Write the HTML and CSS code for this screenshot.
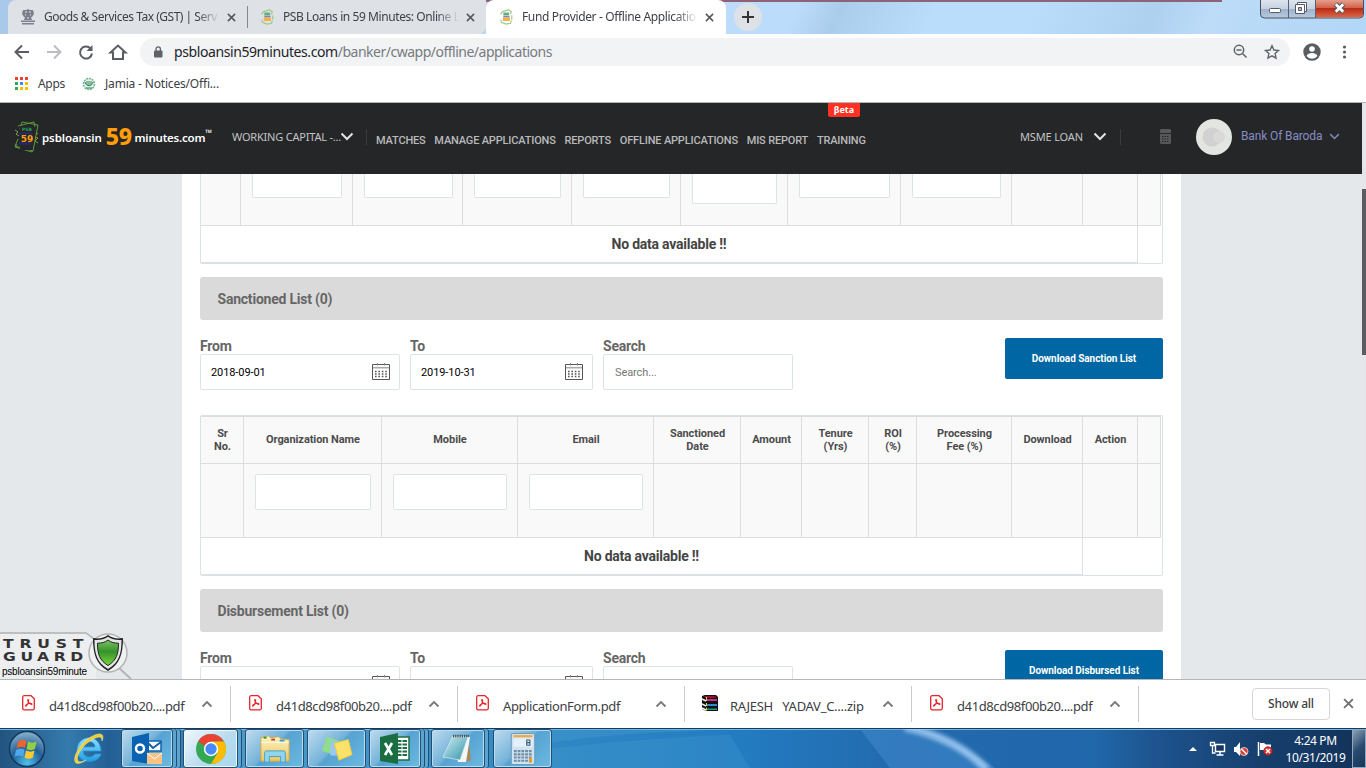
FILE: index.html
```html
<!DOCTYPE html>
<html lang="en">
<head>
<meta charset="utf-8">
<title>Fund Provider - Offline Applications</title>
<link rel="stylesheet" href="styles.css">
</head>
<body>
<svg width="0" height="0" class="defs">
  <defs>
    <linearGradient id="shieldGreen" x1="0" y1="0" x2="0" y2="1"><stop offset="0" stop-color="#7cc462"/><stop offset=".45" stop-color="#36922a"/><stop offset="1" stop-color="#79d43c"/></linearGradient>
    <radialGradient id="orb" cx=".5" cy=".9" r=".9"><stop offset="0" stop-color="#4fc0ee"/><stop offset=".5" stop-color="#235f97"/><stop offset="1" stop-color="#8cb4cf"/></radialGradient>
    <linearGradient id="folder" x1="0" y1="0" x2="0" y2="1"><stop offset="0" stop-color="#fff4c0"/><stop offset="1" stop-color="#e9c661"/></linearGradient>
    <linearGradient id="paper" x1="0" y1="0" x2="1" y2="1"><stop offset="0" stop-color="#d4eef2"/><stop offset="1" stop-color="#2f93a8"/></linearGradient>
    <linearGradient id="ieBlue" x1="0" y1="0" x2="0" y2="1"><stop offset="0" stop-color="#8fe0ff"/><stop offset="1" stop-color="#1c9de6"/></linearGradient>
    <symbol id="cross" viewBox="0 0 10 10"><path d="M1 1l8 8M9 1L1 9" fill="none" stroke="currentColor" stroke-width="1.7"/></symbol>
    <symbol id="caret" viewBox="0 0 12 8"><path d="M1.500 6.500L6 2l4.500 4.500" fill="none" stroke="currentColor" stroke-width="1.800"/></symbol>
    <symbol id="down" viewBox="0 0 14 9"><path d="M1.500 1.500L7 7l5.500-5.500" fill="none" stroke="currentColor" stroke-width="2"/></symbol>
    <symbol id="psb" viewBox="0 0 16 18">
      <path d="M4 3l7-2 3 2-1 3M2 12l1 3 5 2 5-1 1-3M2 6l2-3M14.500 7v5" fill="none" stroke="#9ccb80" stroke-width="1.300"/>
      <rect x="5" y="4" width="6.500" height="3" fill="#5fae84"/><rect x="5" y="7.500" width="7" height="2" fill="#7e88b0"/><rect x="4.500" y="9.500" width="8" height="4" fill="#f3b04b"/>
    </symbol>
    <symbol id="pdf" viewBox="0 0 13 16">
      <path d="M2 .7h7l3.300 3v9.600a1.500 1.500 0 0 1-1.500 1.500H2A1.500 1.500 0 0 1 .7 13.300V2.200A1.500 1.500 0 0 1 2 .7z" fill="#fff" stroke="#e5252a" stroke-width="1.300"/>
      <path d="M6 4.500c-1.200.3.800 4 3.300 4.900 1.500.2.800-1.500-2-.9-2.600.6-4.100 1.800-3.700 2.500.7.700 2.500-2.500 3-4.600.2-1.200-.1-1.900-.6-1.900z" fill="none" stroke="#e5252a" stroke-width="1.100"/>
    </symbol>
    <symbol id="cal" viewBox="0 0 18 17">
      <path d="M.5 1.500h17v15H.5z" fill="#fff" stroke="#555"/><path d="M1 4.700h16" stroke="#aaa" stroke-width="1.600"/>
      <path d="M5.500 0v2.500M12.500 0v2.500" stroke="#888"/>
      <path d="M3 8.500h12.500M3 11h12.500M3 13.500h12.500" stroke="#555" stroke-width="1.400" stroke-dasharray="1.600 1.800"/>
    </symbol>
  </defs>
</svg>

<header class="tabstrip">
  <div class="tabs-muted">
    <div class="tab tab-first">
      <svg class="fav" viewBox="0 0 16 16"><path d="M3 1h3l2-1 2 1h3l1 4-2 3H4L2 5zM5 8h6l1 3H4zM1 11.500h14v1.500H1zM2 14h12v1.500H2z" fill="#7c808e"/><path d="M5 3h2M9 3h2M5 6h1M10 6h1M7 9h2" stroke="#dee1e6"/></svg>
      <span class="tab-title t-gst">Goods &amp; Services Tax (GST) | Serv</span>
      <svg class="x"><use href="#cross"/></svg>
    </div>
    <div class="tab tab-second">
      <svg class="fav"><use href="#psb"/></svg>
      <span class="tab-title t-psb">PSB Loans in 59 Minutes: Online L</span>
      <svg class="x"><use href="#cross"/></svg>
    </div>
  </div>
  <div class="tab tab-active">
    <svg class="fav"><use href="#psb"/></svg>
    <span class="tab-title t-fund">Fund Provider - Offline Applicatio</span>
    <svg class="x"><use href="#cross"/></svg>
  </div>
  <svg class="newtab" viewBox="0 0 28 28"><circle cx="14" cy="14" r="14" fill="#dee1e6"/><path d="M14 8v12M8 14h12" stroke="#333" stroke-width="2"/></svg>
  <svg class="winctl" viewBox="0 0 104 19">
    <defs><linearGradient id="wb" x1="0" y1="0" x2="0" y2="1"><stop offset="0" stop-color="#dfe7ef"/><stop offset=".5" stop-color="#c6d3e2"/><stop offset=".51" stop-color="#9db0c8"/><stop offset="1" stop-color="#b8cbe0"/></linearGradient>
    <linearGradient id="wr" x1="0" y1="0" x2="0" y2="1"><stop offset="0" stop-color="#e8a797"/><stop offset=".5" stop-color="#cf5e48"/><stop offset=".51" stop-color="#bb2a12"/><stop offset="1" stop-color="#d9694e"/></linearGradient></defs>
    <path d="M.5-1v15a4 4 0 0 0 4 4h95a4 4 0 0 0 4-4V-1z" fill="url(#wb)" stroke="#46505e"/>
    <path d="M56-1v18.500h43.500a3.500 3.500 0 0 0 3.500-3.500V-1z" fill="url(#wr)"/>
    <path d="M28.500 0v18M55.500 0v18" stroke="#566273"/>
    <rect x="9.500" y="8.500" width="11" height="4" rx="1" fill="#fff" stroke="#555a66"/>
    <path d="M37.500 2.500h9v9h-9z" fill="#fff" stroke="#555a66"/><path d="M35.500 4.500h9v9h-9z" fill="#fff" stroke="#555a66"/><path d="M38.500 7.500h3v3h-3z" fill="#aabbd0" stroke="#555a66"/>
    <path d="M75.500 4l8 8M83.500 4l-8 8" stroke="#555a66" stroke-width="5"/><path d="M75.800 4.300l7.400 7.400M83.200 4.300l-7.400 7.400" stroke="#fff" stroke-width="2.800"/>
  </svg>
</header>

<div class="toolbar">
  <svg class="nav-icons" viewBox="0 0 140 36" fill="none">
    <path d="M29 18H16M22 11.500L15.500 18l6.500 6.500" stroke="#5a5e63" stroke-width="2"/>
    <path d="M47 18h13M54 11.500l6.500 6.500-6.500 6.500" stroke="#bbbdc0" stroke-width="2"/>
    <path d="M90.500 14.500A6 6 0 1 0 92 19.500" stroke="#5a5e63" stroke-width="2"/><path d="M92.500 11v6h-6z" fill="#5a5e63"/>
    <path d="M110.500 18.500l7.500-7 7.500 7H123v6.500h-10v-6.500z" stroke="#5a5e63" stroke-width="2"/>
  </svg>
  <div class="omnibox">
    <svg class="lock" viewBox="0 0 10 12"><rect x="1" y="4.500" width="8.500" height="7" rx="1" fill="#5f6368"/><path d="M3 5V3a2.200 2.200 0 0 1 4.400 0v2" fill="none" stroke="#5f6368" stroke-width="1.300"/></svg>
    <span class="url"><b>psbloansin59minutes.com</b>/banker/cwapp/offline/applications</span>
    <svg class="omni-icons" viewBox="0 0 50 18" fill="none" stroke="#5f6368"><circle cx="6" cy="7" r="4.700" stroke-width="1.500"/><path d="M9.500 10.500l4 4M3.500 7h5" stroke-width="1.500"/><path d="M39 2.800l1.900 4.200 4.600.5-3.400 3.100.9 4.500-4-2.300-4 2.300.9-4.500-3.400-3.100 4.600-.5z" stroke-width="1.400"/></svg>
  </div>
  <svg class="right-icons" viewBox="0 0 60 20"><circle cx="12" cy="10" r="8.700" fill="#5a5e63"/><circle cx="12" cy="7" r="2.800" fill="#fff"/><path d="M6.500 14c1.500-4 9.500-4 11 0a7 7 0 0 1-11 0z" fill="#fff"/><g fill="#5a5e63"><circle cx="44.500" cy="5" r="1.600"/><circle cx="44.500" cy="10" r="1.600"/><circle cx="44.500" cy="15" r="1.600"/></g></svg>
</div>

<div class="bookmarks">
  <svg class="apps" viewBox="0 0 13 13"><path d="M0 0h3v3H0zM5 0h3v3H5zM10 0h3v3h-3z" fill="#ea4335"/><path d="M0 5h3v3H0zM0 10h3v3H0z" fill="#34a853"/><path d="M5 5h3v3H5z" fill="#4285f4"/><path d="M10 5h3v3h-3zM10 10h3v3h-3zM5 10h3v3H5z" fill="#fbbc05"/></svg>
  <span class="bk-apps">Apps</span>
  <svg class="jamia" viewBox="0 0 14 14"><circle cx="7" cy="7" r="5.500" fill="#e6f1eb" stroke="#74b592" stroke-width="1.500" stroke-dasharray="2 .8"/><path d="M3 5c1 5 7 5 8 0M5 4v4M7 4v5M9 4v4M4 11h6" fill="none" stroke="#2d8259"/></svg>
  <span class="bk-jamia">Jamia - Notices/Offi...</span>
</div>

<div class="viewport">
  <div class="page">
    <nav class="topnav">
      <svg class="logo-cards" viewBox="0 0 27 34">
        <g fill="none" stroke="#5a9a3c" stroke-width="1"><path d="M7 9L9 2l16 3-5 26L2 26l3-7"/><path d="M5 6l16-4 1 5M4 24l-2 3 17 5 1-6"/></g>
        <path d="M2 10l3 2-2 2 3 2M22 17l3 1-3 3 3 2M23 13l2 1" stroke="#7b9e47" fill="none"/>
        <rect x="7" y="6" width="13" height="24" fill="#252628"/><rect x="6" y="12" width="13" height="3" fill="#28275e"/><rect x="6" y="22" width="12" height="3" fill="#28275e"/>
        <text x="14" y="11" text-anchor="middle" class="lg-psb">PSB</text><text x="14" y="22" text-anchor="middle" class="lg-59">59</text>
      </svg>
      <div class="brand"><span class="br-a">psbloansin</span><span class="br-59">59</span><span class="br-b">minutes.com</span><sup>™</sup></div>
      <span class="wc">WORKING CAPITAL -...</span><svg class="dn white"><use href="#down"/></svg>
      <i class="sep sep-a"></i>
      <div class="menu"><span>MATCHES</span><span>MANAGE APPLICATIONS</span><span>REPORTS</span><span>OFFLINE APPLICATIONS</span><span>MIS REPORT</span><span class="train">TRAINING<em class="beta">βeta</em></span></div>
      <span class="msme">MSME LOAN</span><svg class="dn white"><use href="#down"/></svg>
      <i class="sep sep-b"></i>
      <svg class="calc" viewBox="0 0 11 15"><path d="M1 0h9l1 1v3H0V1z" fill="#57585a"/><path d="M0 5h11v9l-1 1H1l-1-1z" fill="#57585a"/><path d="M2 7.500h7M2 10h7M2 12.500h7" stroke="#252628" stroke-dasharray="1.500 1"/></svg>
      <svg class="avatar" viewBox="0 0 36 36"><circle cx="18" cy="18" r="18" fill="#e3e5e1"/><circle cx="16" cy="18" r="9.500" fill="#d0d1d0"/><circle cx="23" cy="18" r="6" fill="#d9dad8"/></svg>
      <span class="bank">Bank Of Baroda</span><svg class="dn lilac"><use href="#down"/></svg>
    </nav>

    <main class="panel">
      <div class="grid-table t1">
        <div class="row filter">
          <span></span><span><i class="inp"></i></span><span><i class="inp"></i></span><span><i class="inp"></i></span><span><i class="inp"></i></span><span><i class="inp tall"></i></span><span><i class="inp"></i></span><span><i class="inp"></i></span><span></span><span></span><span></span>
        </div>
        <div class="nodata nd1">No data available !!</div>
      </div>

      <h2 class="section">Sanctioned List (0)</h2>
      <div class="controls">
        <label class="f-from">From<span class="box">2018-09-01<svg class="cal"><use href="#cal"/></svg></span></label>
        <label class="f-to">To<span class="box">2019-10-31<svg class="cal"><use href="#cal"/></svg></span></label>
        <label class="f-search">Search<span class="box ph">Search...</span></label>
        <button class="dl">Download Sanction List</button>
      </div>

      <div class="grid-table t2">
        <div class="row head">
          <span>Sr<br>No.</span><span>Organization Name</span><span>Mobile</span><span>Email</span><span>Sanctioned<br>Date</span><span>Amount</span><span>Tenure<br>(Yrs)</span><span>ROI<br>(%)</span><span>Processing<br>Fee (%)</span><span>Download</span><span>Action</span><span></span>
        </div>
        <div class="row filter">
          <span></span><span><i class="inp"></i></span><span><i class="inp"></i></span><span><i class="inp"></i></span><span></span><span></span><span></span><span></span><span></span><span></span><span></span><span></span>
        </div>
        <div class="nodata nd2">No data available !!</div>
      </div>

      <h2 class="section">Disbursement List (0)</h2>
      <div class="controls">
        <label class="f-from">From<span class="box"><svg class="cal"><use href="#cal"/></svg></span></label>
        <label class="f-to">To<span class="box"><svg class="cal"><use href="#cal"/></svg></span></label>
        <label class="f-search">Search<span class="box ph"></span></label>
        <button class="dl">Download Disbursed List</button>
      </div>
    </main>
  </div>
  <div class="scroll"><div class="thumb"></div></div>
  <svg class="trust" viewBox="0 0 132 47">
    <path d="M0 1h86l10 8v38H0z" fill="#eceeef"/><path d="M0 1h86l8 6" fill="none" stroke="#aeb0b2" stroke-width="1.500"/>
    <path d="M118 35l13 12" stroke="#b3b5b7" stroke-width="2"/><circle cx="108" cy="21" r="19" fill="#f0f1f2" stroke="#b2b4b6" stroke-width="1.500"/>
    <path d="M108 3c4 3 9 4 15 3 0 16-3 26-15 33-12-7-15-17-15-33 6 1 11 0 15-3z" fill="#222"/>
    <path d="M108 4.800c4 2.700 8.500 3.700 13.500 3.200 0 14-2.500 22.500-13.500 29-11-6.500-13.500-15-13.500-29 5 .5 9.500-.5 13.500-3.200z" fill="#e4e6e6"/>
    <path d="M108 8c3 2.500 6.500 3.200 10.500 3.200 0 11-2 17-10.500 22.300-8.500-5.300-10.500-11.300-10.500-22.300 4 0 7.500-.7 10.500-3.200z" fill="url(#shieldGreen)" stroke="#222"/>
    <g transform="scale(1.25 1)"><text x="2.500" y="16.500" class="tg tg-1">TRUST</text><text x="2.500" y="29.500" class="tg tg-2">GUARD</text></g><text x="2" y="42.500" textLength="85" class="tg-s">psbloansin59minute</text>
  </svg>
</div>

<div class="downloads">
  <div class="dlitem"><svg class="pdf"><use href="#pdf"/></svg><span class="hash">d41d8cd98f00b20....pdf</span><svg class="up"><use href="#caret"/></svg></div>
  <div class="dlitem"><svg class="pdf"><use href="#pdf"/></svg><span class="hash">d41d8cd98f00b20....pdf</span><svg class="up"><use href="#caret"/></svg></div>
  <div class="dlitem"><svg class="pdf"><use href="#pdf"/></svg><span class="form">ApplicationForm.pdf</span><svg class="up"><use href="#caret"/></svg></div>
  <div class="dlitem"><svg class="zip" viewBox="0 0 17 17"><path d="M1 1l3-1h11l2 2v14H5l-4-2z" fill="#111"/><path d="M2 1l3 2h11l-2-2z" fill="#8d1230"/><path d="M6 4h10v2H6z" fill="#d3298e"/><path d="M6 9h10v2H6z" fill="#2f87d0"/><path d="M6 13.500h10v1.500H6z" fill="#15a27a"/><path d="M1 4l4 2M1 9l4 2M1 13l4 2" stroke="#eee" stroke-width="1.500"/><path d="M5.500 2v4M5.500 8v3M5.500 12.500v3" stroke="#e8c93a"/></svg><span class="zipname">RAJESH&nbsp;&nbsp;&nbsp;YADAV_C....zip</span><svg class="up"><use href="#caret"/></svg></div>
  <div class="dlitem"><svg class="pdf"><use href="#pdf"/></svg><span class="hash">d41d8cd98f00b20....pdf</span><svg class="up"><use href="#caret"/></svg></div>
  <button class="showall">Show all</button>
  <svg class="closebar"><use href="#cross"/></svg>
</div>

<footer class="taskbar">
  <svg class="light" viewBox="0 0 1366 40" preserveAspectRatio="none"><path d="M552 14c60-10 110-10 180-14H552z" fill="#5fb4e2" opacity=".2"/><path d="M552 40V20c70-8 130-12 178-14l20 34z" fill="#5fb4e2" opacity=".16"/><path d="M860 0h45c40 12 70 25 90 40H890z" fill="#4a97d6" opacity=".4"/><path d="M905-2c36 8 62 22 82 44" fill="none" stroke="#a6d0f7" stroke-width="8" opacity=".85" filter="blur(2px)"/></svg>
  <svg class="start" viewBox="0 0 38 38"><circle cx="19" cy="19" r="17.500" fill="url(#orb)" stroke="#15395c" stroke-width="1.500"/><path d="M10 12c3-2.500 6-2.500 8.500-1L17 18c-3-1.500-6-1-8.500.5z" fill="#f0642c"/><path d="M20 11.500c3 1.500 6 1.500 8.500 0L27 19c-3 1.500-6 1.500-8.500 0z" fill="#93cf45"/><path d="M8 20c3-2 6-2 8.500-.5L15 26.500c-3-1.500-5.500-1.500-8.500.5z" fill="#4fa8ec"/><path d="M18 20.500c3 1.500 6 1.500 8.500 0L25 27.500c-3 1.800-6 1.500-8.500 0z" fill="#fcc92f"/></svg>
  <svg class="ie" viewBox="0 0 32 34"><path d="M28 19H10c0 7 9 8 12 3h6c-3 10-23 11-24-4C4 3 27 0 28 19zM10 15h12c0-7-11-7-12 0z" fill="url(#ieBlue)" stroke="#3298d6" stroke-width=".8"/><path d="M3 31C-2 27 8 8 22 3c8-3 9 1 7 6 0-5-3-5-9-2C9 13 2 25 5 29c2 2 6 0 8-1-4 3-8 4-10 3z" fill="#f6cc28" stroke="#fff3a6" stroke-width=".5"/></svg>
  <div class="tb outlook"><svg viewBox="0 0 32 32"><path d="M15 8h15v10H15z" fill="#fff" stroke="#0c63ad" stroke-width="1.500"/><path d="M16 9l6 6 8-6" fill="none" stroke="#0c63ad" stroke-width="2"/><path d="M1 4l17-4v31L1 28z" fill="#0b62b2"/><circle cx="9" cy="15.500" r="4" fill="none" stroke="#fff" stroke-width="2.500"/><path d="M16 20h15v11H16z" fill="#f8c386"/><path d="M16 20l7.500 6 7.500-6" fill="none" stroke="#fff"/></svg></div>
  <div class="tb chrome"><svg viewBox="0 0 32 32"><circle cx="16" cy="16" r="15" fill="#34a853"/><path d="M16 16L3 8.500A15 15 0 0 1 29 8.500H16z" fill="#ea4335"/><path d="M16 8.500h13A15 15 0 0 1 16 31l6.500-11z" fill="#fbbc05"/><circle cx="16" cy="16" r="7.200" fill="#fff"/><circle cx="16" cy="16" r="5.700" fill="#4a8af4"/></svg></div>
  <div class="tb explorer"><svg viewBox="0 0 34 30"><path d="M2 3l8-2 2 2 9-1 2 2 9 1v23H2z" fill="url(#folder)" stroke="#c9a84c"/><path d="M5 2h3v2H5z" fill="#20a03c"/><path d="M13 4h4v2h-4z" fill="#c8402c"/><path d="M22 5h5v2h-5z" fill="#3b96de"/><path d="M2 8h30" stroke="#fffbe0"/><path d="M6 29V19q0-2 2-2h18q2 0 2 2v10h-5v-6H11v6z" fill="#8fd5ee" stroke="#4a9cc4"/></svg></div>
  <div class="tb sticky"><svg viewBox="0 0 34 30"><path d="M6 2l12 4-4 15-13-4z" fill="#8fdc8a"/><path d="M10 7h13v15H10z" fill="#98c9f4"/><path d="M14 9l15-4 4 16-14 6z" fill="#fbe268" stroke="#eec93c"/></svg></div>
  <div class="tb excel"><svg viewBox="0 0 32 32"><path d="M16 4h14v23H16z" fill="#fff" stroke="#1c6f43" stroke-width="1.500"/><path d="M18 8h10M18 11.500h10M18 15h10M18 18.500h10M18 22h10" stroke="#1c6f43" stroke-width="2" stroke-dasharray="4.500 1"/><path d="M1 4l18-4v31L1 28z" fill="#1b6e42"/><path d="M6 10l7 12M13 10L6 22" stroke="#fff" stroke-width="2.600"/></svg></div>
  <div class="tb notepad"><svg viewBox="0 0 32 30"><path d="M26 3l3 23-5 2z" fill="#a98756"/><path d="M11 2l17 1-4 25-8 0z" fill="#f4f6f7"/><path d="M11 2l15 1-8 23L1 23z" fill="url(#paper)" stroke="#d9eef2" stroke-width=".7"/><path d="M11 2h16" stroke="#444" stroke-width="2.500" stroke-dasharray="1.200 1"/></svg></div>
  <div class="tb calcapp"><svg viewBox="0 0 24 30"><rect x="1" y=".5" width="22" height="29" rx="1.500" fill="#cfe2f0" stroke="#6f9dc0"/><path d="M3 2h18v2H3z" fill="#f6a836"/><path d="M3 5h18v8H3z" fill="#e3f1fa"/><path d="M15.500 6.500h3v5h-3zM15.500 9h3" fill="none" stroke="#36566e"/><path d="M3.500 17h17M3.500 20h17M3.500 23h17M3.500 26h17" stroke="#6f8ca4" stroke-width="2" stroke-dasharray="2.600 .9"/><path d="M19 23v5" stroke="#f0982a" stroke-width="2.500"/></svg></div>
  <svg class="tray" viewBox="0 0 90 20">
    <path d="M1 12l4-4 4 4z" fill="#fff"/>
    <path d="M27.500 5.500h9v7h-9z" fill="#17375f" stroke="#fff" stroke-width="1.400"/><path d="M32 13v2.500M28.500 16h7" stroke="#fff" stroke-width="1.500"/><path d="M22.500 3.500h4v3h-4zM24.500 6.500v7.500h3" fill="none" stroke="#fff" stroke-width="1.300"/>
    <path d="M46 8h2l4-5v14l-4-4h-2z" fill="#fff"/><circle cx="56" cy="12.500" r="4" fill="#dc3a35" stroke="#fff" stroke-width=".7"/><path d="M53.500 10l5 5" stroke="#fff" stroke-width="1.500"/>
    <path d="M70.500 3v14" stroke="#fff" stroke-width="1.500"/><path d="M72 4h4l2 1.500h5v7h-6L75 11h-3z" fill="#fff"/><circle cx="80" cy="12" r="4.300" fill="#d7332f" stroke="#8a201e" stroke-width=".7"/><path d="M78 10l4 4M82 10l-4 4" stroke="#fff" stroke-width="1.500"/>
  </svg>
  <div class="clock"><span>4:24 PM</span><span>10/31/2019</span></div>
  <div class="peek"></div>
</footer>
</body>
</html>
```
FILE: styles.css
```css
* { box-sizing: border-box; }
body { margin: 0; width: 1366px; height: 768px; overflow: hidden; display: flex; flex-direction: column; font-family: "Noto Sans", sans-serif; background: #fff; }
svg { display: block; flex: none; }
span { white-space: nowrap; }
button { border: 0; font: inherit; padding: 0; }
.defs { position: absolute; }

/* Browser frame */
.tabstrip { height: 34px; flex: none; display: flex; background: linear-gradient(90deg, transparent 240px, #8f6276 240px, #8f6276 1222px, transparent 1222px) 0 0 / 100% 2px no-repeat, linear-gradient(115deg, #a9c9ea 0%, #bcdcfb 53%, #bcdcfb 58%, #abcdec 61%, #bbddfc 68%, #bbddfc 75%, #aed1f0 84%, #bcdcf8 88%, #b2d6f6 100%); }
.tabs-muted { display: flex; width: 478px; margin-left: 8px; background: #dee1e6; border-radius: 8px 0 0 0; border-bottom-right-radius: 8px; }
.tab { display: flex; align-items: center; height: 34px; width: 239px; padding-left: 12px; }
.tab-second { padding-left: 12px; border-left: 1px solid #85888d; border-image: linear-gradient(#dee1e6 20%, #85888d 20%, #85888d 80%, #dee1e6 80%) 1; }
.tab-second .fav { margin-right: 8px; margin-left: -1px; }
.tab-active { width: 240px; background: #fff; border-radius: 8px 8px 0 0; }
.fav { width: 16px; height: 16px; margin-right: 8px; }
.tab-title { font-size: 12px; line-height: 18px; width: 176px; overflow: hidden; color: #3e4146; -webkit-mask-image: linear-gradient(90deg, #000 87%, transparent 100%); mask-image: linear-gradient(90deg, #000 87%, transparent 100%); }
.t-gst { letter-spacing: -.48px; }
.t-psb { letter-spacing: -.42px; }
.t-fund { letter-spacing: -.36px; }
.x { width: 9px; height: 9px; margin-left: 7px; color: #54575c; }
.newtab { width: 28px; height: 28px; margin: 3px 0 0 8px; }
.winctl { width: 104px; height: 19px; margin-left: auto; margin-right: 2px; }
.toolbar { height: 36px; flex: none; display: flex; align-items: center; }
.nav-icons { width: 140px; height: 36px; }
.omnibox { width: 1150px; height: 28px; border-radius: 14px; background: #f1f3f4; display: flex; align-items: center; padding-left: 13px; }
.lock { width: 10px; height: 12px; }
.url { margin-left: 11px; font-size: 14px; letter-spacing: -.5px; color: #777b80; width: 1050px; padding-bottom: 1px; }
.url b { font-weight: 400; color: #222428; letter-spacing: -.41px; }
.omni-icons { width: 50px; height: 18px; margin-left: 9px; }
.right-icons { width: 60px; height: 20px; margin-left: 10px; }
.bookmarks { height: 33px; flex: none; border-bottom: 1px solid #b5b5b8; display: flex; align-items: center; padding: 0 0 5px 15px; font-size: 12px; color: #3c4043; }
.apps { width: 13px; height: 13px; }
.bk-apps { width: 44px; margin-left: 10px; letter-spacing: -.3px; }
.jamia { width: 14px; height: 14px; }
.bk-jamia { margin-left: 9px; letter-spacing: -.18px; }

/* Web page */
.viewport { position: relative; height: 576px; flex: none; display: flex; overflow: hidden; background: #e4e8eb; }
.page { width: 1362px; height: 576px; }
.scroll { width: 4px; padding-top: 86px; background: #e5e6e9; }
.thumb { height: 166px; background: #5b5c5f; }
.topnav { height: 71px; background: #252628; display: flex; align-items: center; padding: 0 0 4px 13px; font-family: "Noto Sans", sans-serif; font-size: 11px; color: #c4c4c5; }
.logo-cards { width: 27px; height: 34px; margin: 1px 2px 0 0; }
.lg-psb { font: 700 4.500px "DejaVu Sans"; fill: #22a45a; }
.lg-59 { font: 700 9px "DejaVu Sans"; fill: #ff9d0a; }
.brand { display: flex; align-items: center; width: 190px; height: 40px; padding-top: 2px; color: #fff; font: 600 11.500px "Noto Sans", sans-serif; letter-spacing: -.1px; }
.br-59 { color: #ff9d0a; font: 800 23px/24px "Noto Sans", sans-serif; letter-spacing: -.4px; margin: 0 3px 4px 4px; }
.br-b { letter-spacing: -.22px; }
.brand sup { font-size: 9px; line-height: 8px; margin-bottom: 9px; }
.wc { width: 108px; letter-spacing: -.2px; }
.dn { width: 14px; height: 9px; }
.white { color: #e3e3e3; }
.lilac { width: 11px; height: 7px; color: #7e84bd; margin-left: 7px; }
.sep { width: 1px; height: 16px; background: #3a3b3d; }
.sep-a { margin: 0 9px 0 12px; }
.menu { display: flex; gap: 8.800px; width: 644px; padding-top: 8px; font: 500 11px Roboto, sans-serif; letter-spacing: -.17px; color: #b9babb; }
.train { position: relative; }
.beta { position: absolute; left: 11px; top: -31px; width: 32px; height: 14px; background: #ff3122; color: #fff; border-radius: 0 0 2px 2px; font: 700 9px/13px "Noto Sans", sans-serif; text-align: center; letter-spacing: 0; }
.msme { width: 73px; letter-spacing: -.15px; }
.sep-b { margin: 0 39px 0 13px; }
.calc { width: 11px; height: 15px; }
.avatar { width: 36px; height: 36px; margin: 0 9px 0 25px; }
.bank { width: 81px; font: 400 12px Roboto, sans-serif; color: #868cc4; letter-spacing: -.13px; margin-bottom: 2px; }
.panel { width: 999px; height: 505px; margin-left: 182px; padding: 0 18px; background: #fff; overflow: hidden; font-family: Roboto, sans-serif; }
.grid-table { width: 963px; border: 1px solid #dbe2e3; border-radius: 2px; }
.row { display: grid; width: 960px; }
.row > span { border-right: 1px solid #dcdddd; border-bottom: 1px solid #dcdfdf; background: #f9f9f9; }
.t1 { height: 90px; border-top: 0; border-radius: 0 0 2px 2px; }
.t1 .row { height: 52px; grid-template-columns: 40px 112px 110px 109px 109px 107px 113px 111px 71px 55px 23px; }
.t1 .row > span { padding: 0 10px 0 11px; }
.t2 { height: 161px; }
.t2 .row { grid-template-columns: 43px 138px 136px 136px 87px 61px 67px 48px 95px 71px 55px 23px; }
.t2 .head { height: 48px; border-top: 1px solid #dcdfdf; }
.t2 .filter { height: 74px; }
.t2 .filter > span { padding: 10px 10px 0 11px; }
.row.head > span { display: flex; align-items: center; justify-content: center; text-align: center; padding: 0 0 1px 1px; font: 700 11px/13px Roboto, sans-serif; color: #4c4c4c; letter-spacing: -.07px; }
.inp { display: block; height: 36px; background: #fff; border: 1px solid #dde4e4; border-radius: 2px; }
.t1 .inp { height: 24px; border-top: 0; border-radius: 0 0 2px 2px; }
.t1 .tall { height: 30px; }
.t1 .row > span:nth-child(3) { padding-right: 9px; }
.nodata { height: 37px; border-right: 1px solid #dbe0e2; border-bottom: 1px solid #dbe2e3; text-align: center; font: 700 14px/37px Roboto, sans-serif; color: #444; letter-spacing: -.22px; }
.nd1 { width: 937px; }
.nd2 { width: 882px; }
.section { height: 43px; margin: 13px 0 0; padding-left: 17.500px; background: #dadada; border-radius: 3px; font: 700 14px/44px Roboto, sans-serif; letter-spacing: -.22px; color: #666; }
.controls { display: flex; gap: 10px; height: 95px; padding-top: 18px; }
.controls label { display: block; font: 700 14px/16px Roboto, sans-serif; letter-spacing: -.22px; color: #666; }
.box { display: flex; align-items: center; height: 36px; border: 1px solid #dbe3e3; border-radius: 2px; background: #fff; padding: 0 9px 0 10px; font: 400 11px Roboto, sans-serif; letter-spacing: -.09px; color: #000; }
.f-from { width: 200px; }
.f-to { width: 183px; }
.f-search { width: 190px; }
.ph { color: #777; padding-left: 11px; }
.cal { width: 18px; height: 17px; margin: 0 0 1px auto; }
.dl { width: 158px; height: 41px; margin-left: auto; border-radius: 2px; background: #0067a4; color: #fff; font: 700 10px Roboto, "Noto Sans", sans-serif; letter-spacing: -.05px; }
.trust { position: absolute; left: 0; top: 529px; width: 132px; height: 47px; }
.tg { font: 700 12.500px "DejaVu Sans", sans-serif; fill: #333; }
.tg-1 { letter-spacing: 4.600px; }
.tg-2 { letter-spacing: 3.600px; }
.tg-s { font: 10px "Liberation Sans", sans-serif; fill: #000; }

/* Download shelf */
.downloads { height: 49px; flex: none; border-top: 1px solid #b4b5b7; background: #fff; display: flex; align-items: center; }
.dlitem { width: 227px; height: 36px; border-right: 1px solid #c9cacc; display: flex; align-items: center; padding-left: 18px; font-size: 13px; color: #3c4043; }
.dlitem:first-child { width: 231px; padding-left: 22px; }
.pdf { width: 13px; height: 16px; margin-bottom: 3px; }
.dlitem span { margin-left: 14px; width: 150px; padding-top: 3px; }
.hash, .form { letter-spacing: -.4px; }
.dlitem .zipname { letter-spacing: -.27px; margin-left: 13px; }
.zip { width: 17px; height: 17px; margin: 0 -1px 2px -2px; }
.up { width: 12px; height: 8px; margin-left: 2px; color: #77787b; }
.showall { width: 78px; height: 32px; margin-left: 113px; padding-bottom: 2px; border: 1px solid #d4d6d9; border-radius: 4px; background: #fff; color: #3c4043; font-size: 12px; font-weight: 500; letter-spacing: -.2px; }
.closebar { width: 11px; height: 11px; margin: 0 0 2px 13px; color: #6f7074; }

/* Taskbar */
.taskbar { position: relative; height: 40px; flex: none; border-top: 1px solid #173b5d; box-shadow: inset 0 1px #74b7e2; display: flex; align-items: center; background: linear-gradient(90deg, #23547f 0, #347bad 5%, #225f95 8%, #4d9bca 17%, #2e86c3 42%, #237cc1 54%, #2369ae 66%, #2068aa 80%, #1d528d 85%, #17406e 92%, #123158 100%); }
.light { position: absolute; left: 0; top: 0; width: 1366px; height: 39px; }
.start { position: relative; width: 38px; height: 38px; margin-left: 8px; }
.ie { width: 32px; height: 34px; margin: 0 15px 0 27px; position: relative; }
.tb { position: relative; height: 39px; width: 59px; display: flex; align-items: center; justify-content: center; border: 1px solid #254d70; border-radius: 3px; margin-left: 3px; background: linear-gradient(135deg, #c0dcef 0, #75b3d9 45%, #56a3d2 50%, #6cb9e2 100%); box-shadow: inset 0 0 0 1px #b8dcf1; }
.tb svg { width: 32px; height: 32px; }
.tb.outlook { width: 52px; margin: 0 10px 0 1px; box-shadow: inset 0 0 0 1px #b8dcf1, 3px 0 #5ba5d2, 4px 0 #254d70, 7px 0 #5ba5d2, 8px 0 #254d70; }
.tb.chrome { width: 55px; margin: 0; background: linear-gradient(135deg, #f2f8fc, #b9dcef 55%, #a7d7ef); box-shadow: inset 0 0 0 1px #eef7fc, 3px 0 #5ba5d2, 4px 0 #254d70; }
.tb.explorer { margin-left: 7px; }
.tb.excel { width: 52px; margin-right: 7px; box-shadow: inset 0 0 0 1px #b8dcf1, 3px 0 #5ba5d2, 4px 0 #254d70, 7px 0 #5ba5d2, 8px 0 #254d70; }
.tb.notepad { width: 54px; margin-right: 5px; box-shadow: inset 0 0 0 1px #b8dcf1, 3px 0 #5ba5d2, 4px 0 #254d70; }
.tray { position: relative; width: 90px; height: 20px; margin-left: auto; }
.clock { position: relative; width: 74px; padding-left: 1px; display: flex; flex-direction: column; align-items: center; color: #fff; font-size: 12px; line-height: 17px; letter-spacing: -.4px; }
.peek { position: relative; width: 14px; height: 39px; border: 1px solid #8fa9c0; background: linear-gradient(135deg, #8da3b8, #2a4b70 50%, #173759); }
```
